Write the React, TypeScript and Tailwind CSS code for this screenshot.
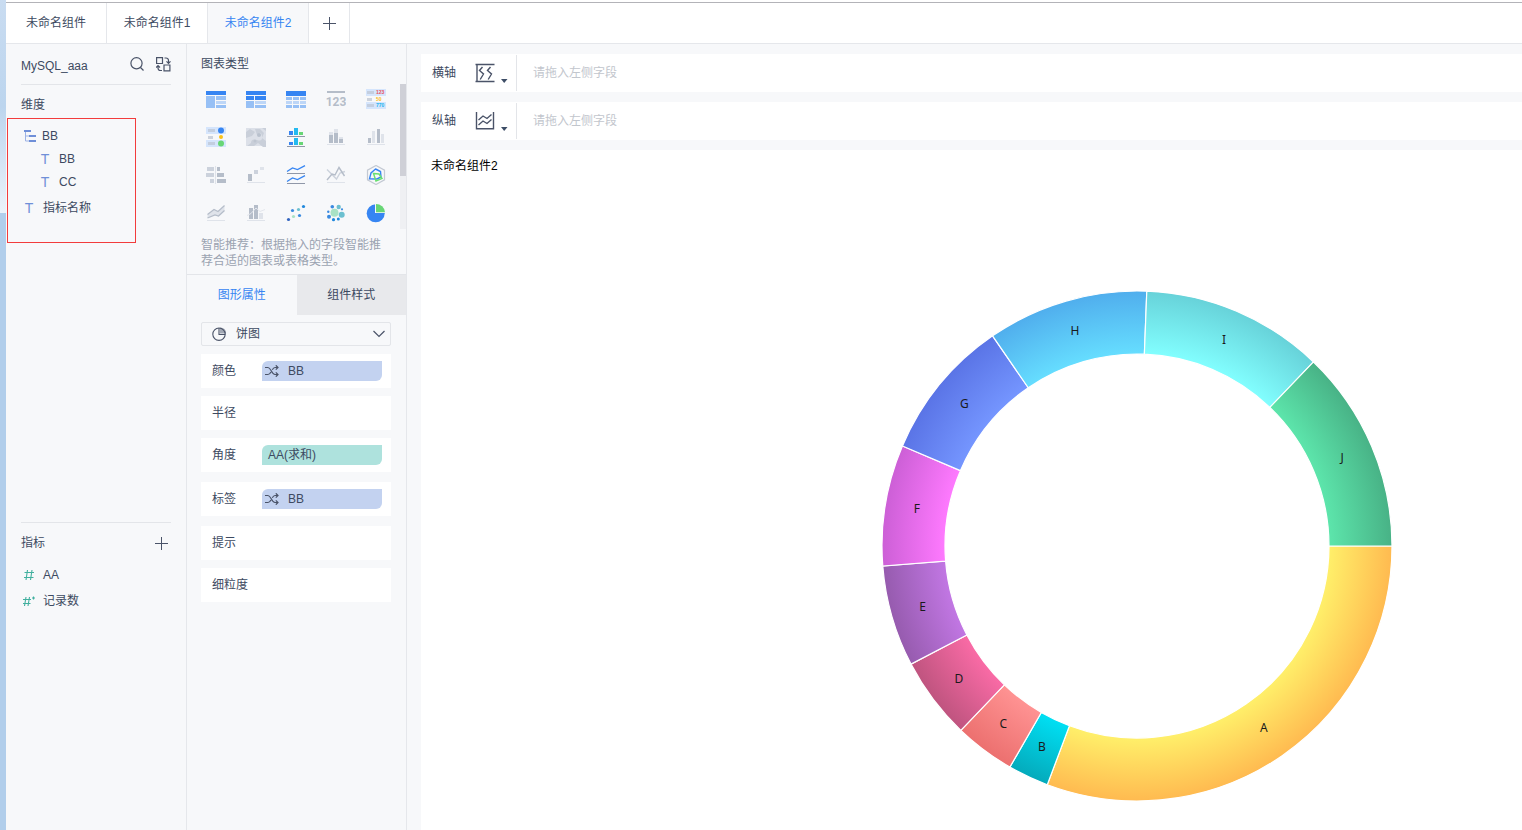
import type { ReactNode } from 'react';

const BLUE = '#3685f2';
const BLUE_MID = '#97c0f5';
const BLUE_LIGHT = '#bdd6f7';
const GRAY = '#b5bdc9';
const GRAY_MID = '#ccd2dc';
const GRAY_LIGHT = '#dfe3ea';

const slices = [
  { name: 'A', from: 0, to: 110.6, inner: '#fff06a', outer: '#ffba50' },
  { name: 'B', from: 110.6, to: 119.9, inner: '#00e0f4', outer: '#04aabb' },
  { name: 'C', from: 119.9, to: 133.7, inner: '#ff9393', outer: '#ec706f' },
  { name: 'D', from: 133.7, to: 152.4, inner: '#fa6ba6', outer: '#bf547f' },
  { name: 'E', from: 152.4, to: 175.5, inner: '#c277e4', outer: '#965bae' },
  { name: 'F', from: 175.5, to: 203.1, inner: '#ff7aff', outer: '#cc5fd6' },
  { name: 'G', from: 203.1, to: 235.5, inner: '#7596ff', outer: '#5a74e6' },
  { name: 'H', from: 235.5, to: 272.2, inner: '#66deff', outer: '#50aeed' },
  { name: 'I', from: 272.2, to: 313.8, inner: '#82ffff', outer: '#67d2d9' },
  { name: 'J', from: 313.8, to: 360, inner: '#5de6ac', outer: '#48b286' },
];

const CENTER = 256;
const OUTER = 255;
const INNER = 192;

function point(radius: number, angle: number) {
  const rad = (angle * Math.PI) / 180;
  return [CENTER + radius * Math.cos(rad), CENTER + radius * Math.sin(rad)];
}

function arcPath(from: number, to: number) {
  const [x1, y1] = point(OUTER, from);
  const [x2, y2] = point(OUTER, to);
  const [x3, y3] = point(INNER, to);
  const [x4, y4] = point(INNER, from);
  return `M${x1} ${y1}A${OUTER} ${OUTER} 0 0 1 ${x2} ${y2}L${x3} ${y3}A${INNER} ${INNER} 0 0 0 ${x4} ${y4}Z`;
}

function DonutChart() {
  return (
    <svg width="512" height="512" viewBox="0 0 512 512" className="shrink-0">
      <defs>
        {slices.map((s) => (
          <radialGradient key={s.name} id={`slice-${s.name}`} gradientUnits="userSpaceOnUse" cx={CENTER} cy={CENTER} r={OUTER}>
            <stop offset="0.75" stopColor={s.inner} />
            <stop offset="1" stopColor={s.outer} />
          </radialGradient>
        ))}
      </defs>
      {slices.map((s) => (
        <path key={s.name} d={arcPath(s.from, s.to)} fill={`url(#slice-${s.name})`} stroke="#fff" strokeWidth="1.2" />
      ))}
      {slices.map((s) => {
        const [x, y] = point(223, (s.from + s.to) / 2);
        return (
          <text key={s.name} x={x} y={y + 3} textAnchor="middle" fill="#1a1a1a" className="font-['Noto_Sans',sans-serif] text-xs">
            {s.name}
          </text>
        );
      })}
    </svg>
  );
}

type Box = [number, number, number, number, string];

function Rects({ items }: { items: Box[] }) {
  return (
    <>
      {items.map(([x, y, w, h, fill]) => (
        <rect key={`${x}-${y}`} x={x} y={y} width={w} height={h} fill={fill} />
      ))}
    </>
  );
}

const baseLine: Box = [1, 17, 18, 1, GRAY_LIGHT];

const chartTypes: { name: string; icon: ReactNode }[] = [
  {
    name: '分组表',
    icon: (
      <Rects
        items={[
          [0, 2, 20, 4, BLUE],
          [0, 7, 9, 12, BLUE_MID],
          [10, 7, 10, 4, BLUE_MID],
          [10, 12, 10, 3, BLUE_LIGHT],
          [10, 16, 10, 3, BLUE_MID],
        ]}
      />
    ),
  },
  {
    name: '交叉表',
    icon: (
      <Rects
        items={[
          [0, 2, 20, 4, BLUE],
          [0, 7, 8, 4, BLUE],
          [9, 7, 11, 4, BLUE],
          [0, 12, 8, 7, BLUE_MID],
          [9, 12, 11, 3, BLUE_LIGHT],
          [9, 16, 11, 3, BLUE_MID],
        ]}
      />
    ),
  },
  {
    name: '明细表',
    icon: (
      <Rects
        items={[
          [0, 2, 20, 5, BLUE],
          [0, 8, 6, 3, BLUE_MID],
          [7, 8, 6, 3, BLUE_MID],
          [14, 8, 6, 3, BLUE_MID],
          [0, 12, 6, 3, BLUE_LIGHT],
          [7, 12, 6, 3, BLUE_LIGHT],
          [14, 12, 6, 3, BLUE_LIGHT],
          [0, 16, 6, 3, BLUE_MID],
          [7, 16, 6, 3, BLUE_MID],
          [14, 16, 6, 3, BLUE_MID],
        ]}
      />
    ),
  },
  {
    name: 'KPI指标卡',
    icon: (
      <>
        <rect x="1" y="2" width="18" height="2" fill={GRAY} />
        <text x="10" y="17" textAnchor="middle" fill={GRAY} className="font-['Liberation_Sans_Narrow','Roboto',sans-serif] text-[12px] font-bold">
          123
        </text>
      </>
    ),
  },
  {
    name: '颜色表格',
    icon: (
      <>
        <Rects
          items={[
            [0, 0, 20, 7, '#d5e5fc'],
            [0, 13, 20, 7, '#d5e5fc'],
            [1, 2, 7, 3, '#c3cedf'],
            [1, 9, 5, 3, GRAY_MID],
            [1, 15, 7, 3, '#c3cedf'],
          ]}
        />
        <g className="font-['Liberation_Sans',sans-serif] text-[5px] font-bold">
          <text x="10" y="5" fill="#e8545f">123</text>
          <text x="10" y="12" fill="#fbbd1e">50</text>
          <text x="10" y="18" fill="#27b5ee">770</text>
        </g>
      </>
    ),
  },
  {
    name: '热力点表',
    icon: (
      <>
        <Rects
          items={[
            [0, 0, 20, 7, '#d5e5fc'],
            [0, 13, 20, 7, '#d5e5fc'],
            [2, 2, 7, 3, '#c3cedf'],
            [2, 9, 5, 3, GRAY_MID],
            [2, 15, 7, 3, '#c3cedf'],
          ]}
        />
        <circle cx="15" cy="3.5" r="3" fill={BLUE} />
        <circle cx="15" cy="10" r="2" fill="#fbc318" />
        <circle cx="15" cy="16.5" r="3" fill="#68d676" />
      </>
    ),
  },
  {
    name: '热力地图',
    icon: (
      <>
        <rect y="1" width="20" height="18" fill="#dce0e8" />
        <path d="M0 5l4-3 5 3-3 4-6 2zM11 8q4-5 5 1t-5 4-6 3l-4 3h7l4-3 5 4h3v-6l-4-3 2-5-4-4h-5zM16 1h4v3z" fill="#c9cfd9" />
        <circle cx="13" cy="8" r="2" fill="#b9c1cd" />
        <circle cx="9" cy="14" r="1.5" fill="#bec5d0" />
      </>
    ),
  },
  {
    name: '分区柱形图',
    icon: (
      <Rects
        items={[
          [3, 4, 4, 4, BLUE],
          [8, 1, 4, 7, '#24baf0'],
          [13, 5, 4, 3, '#68d676'],
          [1, 9, 18, 1, '#8f97a8'],
          [3, 15, 4, 3, BLUE],
          [8, 11, 4, 7, '#24baf0'],
          [13, 15, 4, 3, '#68d676'],
          [1, 19, 18, 1, '#8f97a8'],
        ]}
      />
    ),
  },
  {
    name: '堆积柱形图',
    icon: (
      <Rects
        items={[
          [3, 5, 4, 3, GRAY_LIGHT],
          [3, 8, 4, 8, GRAY],
          [8, 2, 4, 4, GRAY_LIGHT],
          [8, 6, 4, 10, GRAY],
          [13, 10, 4, 2, GRAY_LIGHT],
          [13, 12, 4, 4, GRAY],
          baseLine,
        ]}
      />
    ),
  },
  {
    name: '多系列柱形图',
    icon: (
      <Rects
        items={[
          [2, 11, 3, 5, GRAY],
          [6, 4, 3, 12, GRAY_LIGHT],
          [11, 2, 3, 14, GRAY],
          [15, 7, 3, 9, GRAY_LIGHT],
          baseLine,
        ]}
      />
    ),
  },
  {
    name: '对比柱形图',
    icon: (
      <Rects
        items={[
          [1, 2, 7, 4, GRAY_MID],
          [0, 8, 8, 4, GRAY_MID],
          [4, 14, 4, 4, GRAY_MID],
          [9, 1, 1, 18, GRAY_LIGHT],
          [11, 2, 3, 4, GRAY],
          [11, 8, 7, 4, GRAY],
          [11, 14, 9, 4, GRAY],
        ]}
      />
    ),
  },
  {
    name: '瀑布图',
    icon: (
      <Rects items={[[2, 9, 4, 7, GRAY], [8, 5, 4, 4, GRAY_MID], [14, 2, 4, 3, GRAY_LIGHT], baseLine]} />
    ),
  },
  {
    name: '分区折线图',
    icon: (
      <>
        <path d="M1 6.5L6.5 3l5 1.5L19 .7M1 16.5L6.5 13l5 1.5 7.5-3.8" fill="none" stroke={BLUE} strokeWidth="1.3" />
        <Rects items={[[1, 8, 18, 1, '#8f97a8'], [1, 18, 18, 1, '#8f97a8']]} />
      </>
    ),
  },
  {
    name: '多系列折线图',
    icon: (
      <>
        <path d="M1 4.5L10.5 14l3.5-6 5-1.5" fill="none" stroke={GRAY_MID} strokeWidth="1.4" />
        <path d="M1 15l5-6 3 1 4-7.5L18.5 11" fill="none" stroke={GRAY} strokeWidth="1.4" />
        <Rects items={[baseLine]} />
      </>
    ),
  },
  {
    name: '雷达图',
    icon: (
      <g fill="none">
        <path d="M10 .5l8.5 4.7v9.6L10 19.5l-8.5-4.7V5.2z" stroke="#c3c9d3" strokeWidth="1.2" />
        <path d="M9.500 4l5 2.500.5 5.500-4 2-7.500-.2L5 8z" stroke={BLUE} strokeWidth="1.4" />
        <path d="M7.500 8.500l5.500.5 3 4.500-6 2.500z" stroke="#68e070" strokeWidth="1.4" />
      </g>
    ),
  },
  {
    name: '面积图',
    icon: (
      <>
        <path d="M1.5 11.5L8 6.5l4 2 6.5-6v5.5l-6 5.5L9 12l-7.5 3z" fill={GRAY_LIGHT} />
        <path d="M1.5 11.5L8 6.5l4 2 6.5-6M1.5 15L9 12l3.5 1 6-5.5" fill="none" stroke={GRAY} strokeWidth="1.2" />
        <Rects items={[baseLine]} />
      </>
    ),
  },
  {
    name: '组合图',
    icon: (
      <>
        <Rects items={[[3, 5, 4, 11, GRAY], [8, 2, 4, 14, GRAY], [13, 10, 4, 6, GRAY_LIGHT], baseLine]} />
        <path d="M1 12.5l4-2L10 5l4 3.5 5-2" fill="none" stroke="#e4e7ed" />
      </>
    ),
  },
  {
    name: '散点图',
    icon: (
      <>
        <circle cx="2.5" cy="16.5" r="1.6" fill="#3465c0" />
        <circle cx="6.5" cy="7.5" r="1.6" fill="#3a8ae0" />
        <circle cx="7.5" cy="13.5" r="1.6" fill="#a8e2c5" />
        <circle cx="12.5" cy="6.5" r="1.6" fill="#6cc0d0" />
        <circle cx="13.5" cy="12.5" r="1.6" fill="#3a8ae0" />
        <circle cx="17.5" cy="3.5" r="1.6" fill="#2088dc" />
      </>
    ),
  },
  {
    name: '聚合气泡图',
    icon: (
      <>
        <circle cx="8.5" cy="9.7" r="4" fill="#a8e2c5" />
        <circle cx="12.7" cy="4" r="2.2" fill="#6cc0d0" />
        <circle cx="15.7" cy="11.7" r="3" fill="#6cc0d0" />
        <circle cx="6.3" cy="3.7" r="1.8" fill="#3a8ae0" />
        <circle cx="3" cy="13.7" r="2" fill="#3a8ae0" />
        <circle cx="7.5" cy="16.7" r="1.6" fill="#2088dc" />
        <circle cx="12.3" cy="16" r="1.5" fill="#2088dc" />
        <circle cx="2.3" cy="8.7" r="1.2" fill="#3a8ae0" />
        <circle cx="16" cy="6.3" r="1.1" fill="#3a8ae0" />
      </>
    ),
  },
  {
    name: '饼图',
    icon: (
      <>
        <circle cx="9.7" cy="10.3" r="9" fill={BLUE} />
        <path d="M9 0h11v10H9z" fill="#f7f8fa" />
        <path d="M10 9.200V1a9 9 0 0 1 9 8.200z" fill="#68d676" />
      </>
    ),
  },
];

function ShuffleIcon() {
  return (
    <svg width="14" height="12" viewBox="0 0 14 12" fill="none" stroke="#4a5368" strokeWidth="1.2">
      <path d="M0 2.5h3c3 0 3.5 7 7 7h3M0 9.5h3c1.500 0 2.200-1.200 2.900-2.600M7.300 4.800C8 3.500 8.700 2.500 10 2.500h3M10.800.3L13 2.500l-2.200 2.200M10.800 7.300L13 9.500l-2.200 2.200" />
    </svg>
  );
}

function PlusIcon() {
  return (
    <svg width="13" height="13" viewBox="0 0 13 13" stroke="#4a5368">
      <path d="M6.5 0v13M0 6.5h13" />
    </svg>
  );
}

function DimensionIcon() {
  return <span className="w-3 text-center text-sm leading-4 text-[#6f8fd8]">T</span>;
}

function LeftPanel() {
  return (
    <aside className="flex w-[181px] shrink-0 flex-col border-r border-[#e5e7eb] bg-[#f7f8fa] px-[15px]">
      <div className="flex h-[41px] items-center border-b border-[#e3e5e9]">
        <span className="flex-1 pt-1">MySQL_aaa</span>
        <button aria-label="搜索" className="mr-3">
          <svg width="14" height="14" viewBox="0 0 14 14" fill="none" stroke="#4a5368" strokeWidth="1.2">
            <circle cx="6.5" cy="6.3" r="5.600" />
            <path d="M10.500 10.500l3 3" />
          </svg>
        </button>
        <button aria-label="切换数据集">
          <svg width="15" height="15" viewBox="0 0 15 15" fill="none" stroke="#4a5368" strokeWidth="1.2">
            <path d="M.6.6h5.900v5.900H.6zM8 8h5.900v5.900H8z" />
            <path d="M8.500 1h1.500a2.500 2.500 0 0 1 2.500 2.500V6M10.500 4.300l2 2 2-2M6 13.500H4.500A2.500 2.500 0 0 1 2 11V8.700M0 10.500l2-2 2 2" />
          </svg>
        </button>
      </div>
      <h2 className="mt-3 leading-4">维度</h2>

      <div className="relative h-[410px] border-b border-[#e3e5e9] pt-[11px]">
        <div className="pointer-events-none absolute top-[5px] -left-[14px] h-[125px] w-[129px] border border-[#f23c3c]" />
        <ul className="pl-0.5">
          <li className="flex h-6 items-center gap-1.5">
            <svg width="13" height="12" viewBox="0 0 13 12" fill="#6f8fd8">
              <path d="M2.500 1v10H6M2.500 6H6" fill="none" stroke="#9db3e6" />
              <path d="M1 0h7v2H1zM6 5h7v2H6zM6 10h7v2H6z" />
            </svg>
            <span>BB</span>
          </li>
          <li className="flex h-[22px] items-center gap-2 pl-4">
            <DimensionIcon />
            <span>BB</span>
          </li>
          <li className="flex h-6 items-center gap-2 pl-4">
            <DimensionIcon />
            <span>CC</span>
          </li>
          <li className="flex h-7 items-center gap-2">
            <DimensionIcon />
            <span>指标名称</span>
          </li>
        </ul>
      </div>

      <div className="flex h-10 items-center justify-between pr-[3px]">
        <h2>指标</h2>
        <button aria-label="添加指标">
          <PlusIcon />
        </button>
      </div>
      <ul className="-mt-px pl-0.5">
        <li className="flex h-[26px] items-center gap-2">
          <svg width="12" height="12" viewBox="0 0 12 12" fill="none" stroke="#42b09f" strokeWidth="1.1">
            <path d="M1.500 3.500h9.500M1 8.500h9.500M4.500 1L3 11M9 1L7.500 11" />
          </svg>
          <span>AA</span>
        </li>
        <li className="flex h-[26px] items-center gap-2">
          <svg width="12" height="12" viewBox="0 0 12 12" fill="none" stroke="#42b09f" strokeWidth="1.1">
            <path d="M0 4.500h8M0 8.500h7.500M3 2L1.500 11M6.500 2L5 11" />
            <path d="M10.500 1.500v3M9 3h3" />
          </svg>
          <span>记录数</span>
        </li>
      </ul>
    </aside>
  );
}

const attributes = [
  { label: '颜色', field: 'BB', kind: 'dimension', gap: 'mt-2' },
  { label: '半径', gap: 'mt-2' },
  { label: '角度', field: 'AA(求和)', kind: 'measure', gap: 'mt-2' },
  { label: '标签', field: 'BB', kind: 'dimension', gap: 'mt-2.5' },
  { label: '提示', gap: 'mt-2.5' },
  { label: '细粒度', gap: 'mt-2' },
];

function ChartPanel() {
  return (
    <aside className="w-[220px] shrink-0 border-r border-[#e5e7eb] bg-[#f7f8fa]">
      <h2 className="h-10 pl-3.5 leading-10">图表类型</h2>
      <div className="flex h-[145px]">
        <div className="grid flex-1 auto-rows-[20px] grid-cols-[repeat(5,20px)] gap-x-5 gap-y-[18px] pt-[5px] pl-[19px]">
          {chartTypes.map((type) => (
            <button key={type.name} aria-label={type.name} className="size-5">
              <svg width="20" height="20" viewBox="0 0 20 20">
                {type.icon}
              </svg>
            </button>
          ))}
        </div>
        <div className="w-1.5 bg-[#eff0f3]">
          <div className="h-[92px] bg-[#cfd0d7]" />
        </div>
      </div>
      <p className="h-[46px] border-b border-[#e3e5e9] pt-2 pr-5 pl-3.5 leading-4 text-[#9ba3b1]">
        智能推荐：根据拖入的字段智能推荐合适的图表或表格类型。
      </p>

      <div className="flex h-10">
        <button className="flex-1 text-[#3685f2]">图形属性</button>
        <button className="flex-1 bg-[#e8e9ec]">组件样式</button>
      </div>

      <div className="pt-[7px] pr-[15px] pl-3.5">
        <button className="flex h-6 w-full items-center rounded-xs border border-[#e3e5e9] pr-1 pl-2.5">
          <svg width="14" height="14" viewBox="0 0 14 14" fill="none" stroke="#4a5368" strokeWidth="1.1">
            <path d="M8.500 1v5h5a5 5 0 0 0-5-5z" fill="#a3a9b5" stroke="#a3a9b5" />
            <circle cx="7" cy="7.200" r="6.200" />
            <path d="M7 1v6.500h6.200" />
          </svg>
          <span className="ml-2.5 flex-1 text-left">饼图</span>
          <svg width="14" height="8" viewBox="0 0 14 8" fill="none" stroke="#4a5368" strokeWidth="1.2">
            <path d="M1.500 1L7 6.500 12.500 1" />
          </svg>
        </button>
        {attributes.map((attr) => (
          <div key={attr.label} className={`${attr.gap} flex h-[34px] items-center bg-white pr-[9px] pl-[11px]`}>
            <span className="w-[50px]">{attr.label}</span>
            {attr.field && (
              <div
                className={`flex h-5 flex-1 items-center rounded-tl-md rounded-br-md ${
                  attr.kind === 'dimension' ? 'gap-[9px] bg-[#c3d2f0] pl-[3px]' : 'bg-[#aee2dd] pl-1.5'
                }`}
              >
                {attr.kind === 'dimension' && <ShuffleIcon />}
                <span>{attr.field}</span>
              </div>
            )}
          </div>
        ))}
      </div>
    </aside>
  );
}

function AxisRow({ id, label, icon }: { id: string; label: string; icon: ReactNode }) {
  return (
    <div className="flex h-[38px] items-center bg-white pl-[11px]">
      <label htmlFor={id} className="w-[43px]">
        {label}
      </label>
      <button aria-label={`${label}设置`} className="flex items-end gap-[5px]">
        <svg width="20" height="20" viewBox="0 0 20 20" fill="none" stroke="#4a5368" strokeWidth="1.4">
          {icon}
        </svg>
        <svg width="8" height="4" viewBox="0 0 8 4" fill="#3d4d66">
          <path d="M1 0h6.500L4.200 4z" />
        </svg>
      </button>
      <input
        id={id}
        placeholder="请拖入左侧字段"
        className="ml-2 h-9 min-w-0 flex-1 border-l border-[#e3e5e9] pl-4 outline-none placeholder:text-[#c2c6cd]"
      />
    </div>
  );
}

export default function App() {
  return (
    <div className="flex min-h-screen font-['Liberation_Sans','Noto_Sans_CJK_SC',sans-serif] text-xs text-[#3d4a61]">
      <div className="flex w-1.5 shrink-0 flex-col bg-[#b1ceeb]">
        <div className="h-[213px] bg-linear-to-b from-[#c9dcf1] via-[#bcd5ee] to-[#ecf3fa]" />
      </div>
      <div className="flex min-w-0 flex-1 flex-col bg-white pt-0.5">
        <nav className="flex h-[42px] border-t border-b border-t-[#b3b3b8] border-b-[#e5e7eb]">
          <button className="w-[101px] border-r border-[#e5e7eb]">未命名组件</button>
          <button className="w-[101px] border-r border-[#e5e7eb]">未命名组件1</button>
          <button className="w-[101px] border-r border-[#e5e7eb] bg-[#f7f8fa] text-[#3685f2]">未命名组件2</button>
          <button aria-label="新建组件" className="flex w-[41px] items-center justify-center border-r border-[#e5e7eb]">
            <PlusIcon />
          </button>
        </nav>
        <div className="flex flex-1">
          <LeftPanel />
          <ChartPanel />
          <main className="flex min-w-0 flex-1 flex-col gap-2.5 bg-[#f7f8fa] pt-2.5 pl-3.5">
            <AxisRow
              id="x-axis"
              label="横轴"
              icon={<path d="M.5 1.500h19M.5 18.500h19M2 1.500v17M7.500 4L4.500 7.500l4 3.500-3.300 5.500M15.500 4l-3 3.500 4 3.500-3.300 5.500" />}
            />
            <AxisRow
              id="y-axis"
              label="纵轴"
              icon={<path d="M1.500 1v17.500M18.500 1v17.500M.8 17.800h18.400M3.500 9L8 5l4 2.500 4.500-4M3.500 14L8 10l4 2.500 4.500-4" />}
            />
            <section className="flex flex-1 flex-col bg-white">
              <h1 className="px-2.5 pt-1.5 leading-5 text-black">未命名组件2</h1>
              <div className="flex justify-end pt-[114px] pr-[129px]">
                <DonutChart />
              </div>
            </section>
          </main>
        </div>
      </div>
    </div>
  );
}
